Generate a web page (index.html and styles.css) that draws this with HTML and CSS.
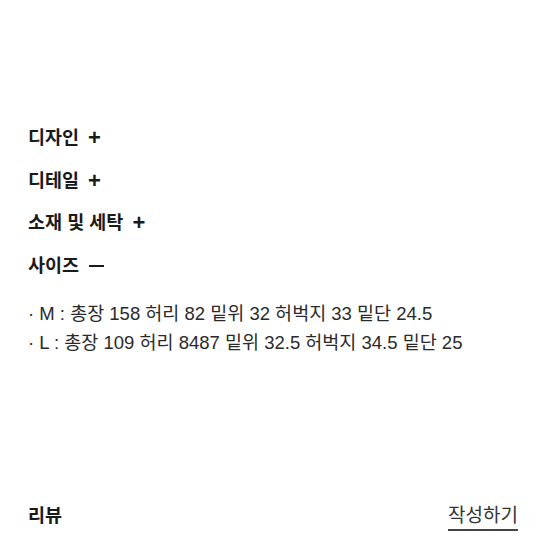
FILE: index.html
```html
<!DOCTYPE html>
<html lang="ko">
<head>
<meta charset="utf-8">
<link rel="stylesheet" href="styles.css">
</head>
<body>
<div class="page">
  <div class="sections">
    <div class="sec">디자인 <span class="sign">+</span></div>
    <div class="sec">디테일 <span class="sign">+</span></div>
    <div class="sec">소재 및 세탁 <span class="sign">+</span></div>
    <div class="sec">사이즈 <span class="minus" aria-label="접기"></span></div>
  </div>
  <div class="sizes">
    <p class="line">· M : 총장 158 허리 82 밑위 32 허벅지 33 밑단 24.5</p>
    <p class="line">· L : 총장 109 허리 8487 밑위 32.5 허벅지 34.5 밑단 25</p>
  </div>
  <div class="review">
    <span class="review-title">리뷰</span>
    <span class="write">작성하기</span>
  </div>
</div>
</body>
</html>
```
FILE: styles.css
```css
html, body {
  margin: 0;
  padding: 0;
  background: #ffffff;
}
body {
  font-family: "Liberation Sans", "Noto Sans CJK KR", sans-serif;
  color: #1e1e1e;
}
.page {
  padding: 125px 36px 0 28px;
}
.sections {
  display: flex;
  flex-direction: column;
  gap: 17.7px;
}
.sec {
  display: flex;
  align-items: center;
  font-size: 18.5px;
  font-weight: 700;
  line-height: 25px;
  color: #1a1a1a;
}
.sign {
  font-size: 22px;
  line-height: 25px;
  margin-left: 9px;
}
.minus {
  display: inline-block;
  width: 15px;
  height: 2px;
  background: #1a1a1a;
  margin-left: 10px;
}
.sizes {
  margin-top: 21px;
}
.line {
  margin: 0;
  font-size: 18.5px;
  line-height: 29px;
  color: #2a2a2a;
  white-space: nowrap;
}
.review {
  margin-top: 146px;
  display: flex;
  justify-content: space-between;
  align-items: flex-start;
}
.review-title {
  font-size: 18.5px;
  font-weight: 700;
  line-height: 25px;
  color: #1a1a1a;
}
.write {
  font-size: 19px;
  line-height: 25px;
  color: #333333;
  border-bottom: 2px solid #444444;
  padding-bottom: 1px;
}
```
